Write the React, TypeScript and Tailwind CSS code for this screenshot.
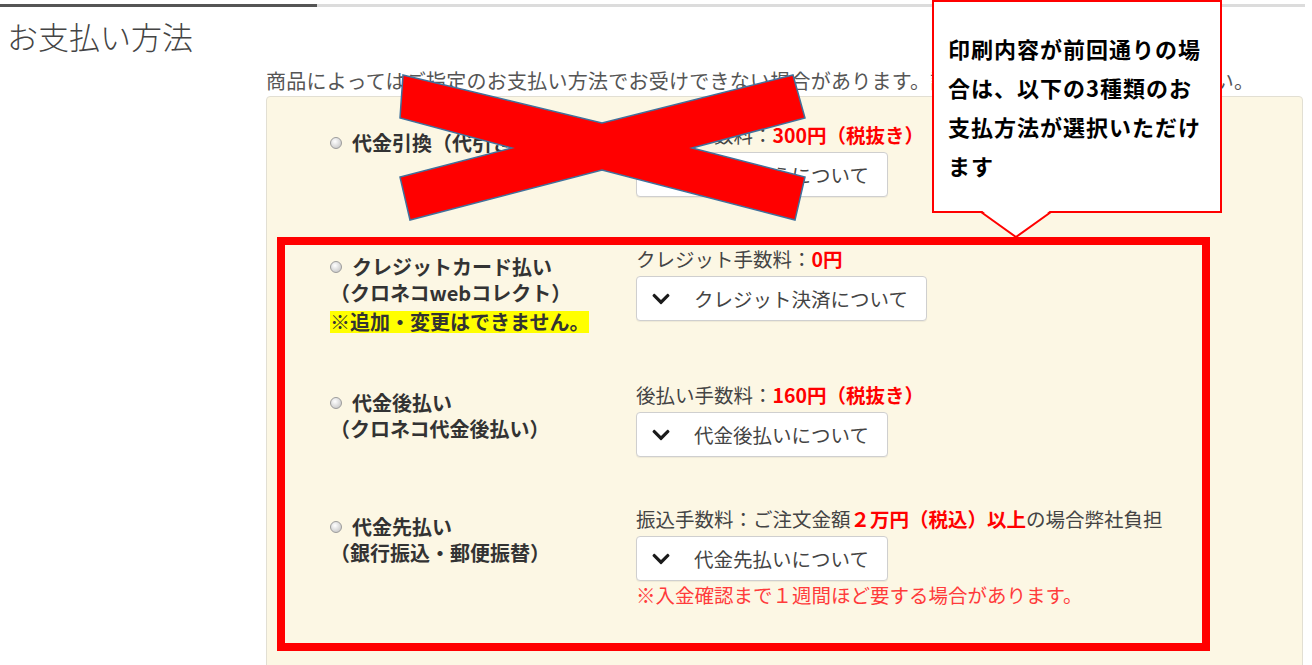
import type { ReactNode } from 'react';
import { FaChevronDown } from 'react-icons/fa';

interface Method {
  title: string;
  sub?:  string;
  lock?: string;
  fee:   ReactNode;
  label: string;
  warn?: string;
}

function Red({ children }: { children: ReactNode }) {
  return <span className="font-bold text-[#ff0000]">{children}</span>;
}

const methods: Method[] = [
  {
    title: '代金引換（代引き）',
    fee:   <>代引き手数料：<Red>300円（税抜き）</Red></>,
    label: '代金引換えについて',
  },
  {
    title: 'クレジットカード払い',
    sub:   '（クロネコwebコレクト）',
    lock:  '※追加・変更はできません。',
    fee:   <>クレジット手数料：<Red>0円</Red></>,
    label: 'クレジット決済について',
  },
  {
    title: '代金後払い',
    sub:   '（クロネコ代金後払い）',
    fee:   <>後払い手数料：<Red>160円（税抜き）</Red></>,
    label: '代金後払いについて',
  },
  {
    title: '代金先払い',
    sub:   '（銀行振込・郵便振替）',
    fee:   <>振込手数料：ご注文金額<Red>２万円（税込）以上</Red>の場合弊社負担</>,
    label: '代金先払いについて',
    warn:  '※入金確認まで１週間ほど要する場合があります。',
  },
];

function Radio() {
  return (
    <span className="mr-[10px] inline-block h-[12px] w-[12px] shrink-0 rounded-full border border-[#9c9c9c] bg-[radial-gradient(circle_at_40%_35%,#ffffff,#bdbdbd)]" />
  );
}

function MethodRow({ m }: { m: Method }) {
  return (
    <div className="grid grid-cols-[306px_1fr]">
      {/* Label column */}
      <div className="pt-[8px] text-[20px] font-bold leading-[26px] text-[#333]">
        <div className="flex items-center">
          <Radio />
          <span>{m.title}</span>
        </div>
        {m.sub && <div>{m.sub}</div>}
        {m.lock && (
          <div className="mt-[5px] flex">
            <span className="bg-[#ffff00] leading-[22px]">{m.lock}</span>
          </div>
        )}
      </div>

      {/* Fee + info button */}
      <div className="text-[19.5px] text-[#444]">
        <p className="leading-[26px] whitespace-nowrap">{m.fee}</p>
        <div className="mt-[4px] flex">
          <button className="flex h-[45px] items-center rounded-[4px] border border-[#cfcfcf] bg-white pl-[14px] pr-[18px] text-[19.5px] text-[#444] shadow-[0_1px_1px_rgba(0,0,0,0.06)]">
            <FaChevronDown className="mr-[23px] h-[20px] w-[20px] text-[#1a1a1a]" />
            {m.label}
          </button>
        </div>
        {m.warn && <p className="mt-[2px] leading-[24px] text-[#ff3b3b]">{m.warn}</p>}
      </div>
    </div>
  );
}

export default function App() {
  return (
    <div className="relative h-[665px] w-[1312px] overflow-hidden bg-white font-['Noto_Sans_CJK_JP',sans-serif] text-[#333]">
      {/* Tab rule */}
      <div className="flex pt-[4px]">
        <div className="h-[3px] w-[317px] bg-[#555]" />
        <div className="h-[3px] w-[988px] bg-[#dcdcdc]" />
      </div>

      <h1 className="mt-[9px] pl-[7px] text-[31px] font-light leading-[40px] text-[#444]">お支払い方法</h1>

      <div className="ml-[266px] mt-[12px] w-[1037px]">
        <p className="whitespace-nowrap text-[20px] leading-[26px] tracking-[0.25px] text-[#555]">
          商品によってはご指定のお支払い方法でお受けできない場合があります。詳しくはこちらをご確認ください。
        </p>
        <div className="mt-[2px] rounded-[4px] border border-[#e2dfd3] bg-[#fcf7e4] pb-[100px] pl-[63px] pt-[25px]">
          <div className="flex flex-col gap-[49px]">
            {methods.map(m => (
              <MethodRow key={m.title} m={m} />
            ))}
          </div>
        </div>
      </div>

      {/* Annotation: red frame */}
      <div className="absolute left-[277px] top-[237px] h-[414px] w-[933px] border-[8px] border-[#ff0000]" />

      {/* Annotation: cross over COD */}
      <svg className="absolute left-[390px] top-[70px]" width="430" height="160" viewBox="0 0 430 160">
        <polygon
          points="13,5 212,53 403,5 415,48 302,78 415,107 405,150 212,100 20,150 10,107 122,78 10,48"
          fill="#ff0000"
          stroke="#41719c"
          strokeWidth="1.5"
          strokeLinejoin="miter"
        />
      </svg>

      {/* Annotation: callout */}
      <div className="absolute left-[932px] top-0 h-[213px] w-[290px] border-2 border-[#ff0000] bg-white pl-[14px] pt-[27px] text-[22px] font-bold leading-[39px] tracking-[1px] text-black">
        印刷内容が前回通りの場<br />
        合は、以下の3種類のお<br />
        支払方法が選択いただけ<br />
        ます
      </div>
      <svg className="absolute left-[978px] top-[210px]" width="76" height="30" viewBox="0 0 76 30">
        <polygon points="3,0 73,0 38,27" fill="#ffffff" />
        <polyline points="3,2 38,27 73,2" fill="none" stroke="#ff0000" strokeWidth="2" />
      </svg>
    </div>
  );
}
